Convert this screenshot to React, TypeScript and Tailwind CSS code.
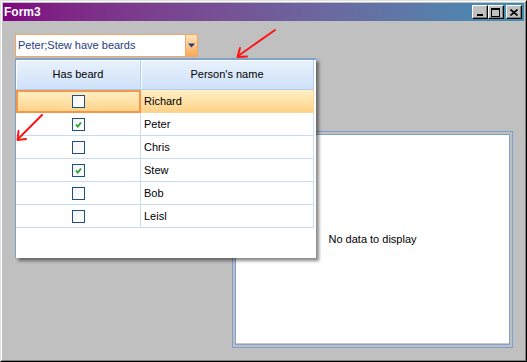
import React from "react";

const rows = [
  { name: "Richard", checked: false, selected: true },
  { name: "Peter", checked: true, selected: false },
  { name: "Chris", checked: false, selected: false },
  { name: "Stew", checked: true, selected: false },
  { name: "Bob", checked: false, selected: false },
  { name: "Leisl", checked: false, selected: false },
];

function CheckBox({ checked }: { checked: boolean }) {
  return (
    <div className="w-[13px] h-[13px] border border-[#1c5180] bg-linear-to-br from-[#f4f4f4] to-white flex items-center justify-center">
      {checked && (
        <svg width="9" height="9" viewBox="0 0 9 9">
          <path d="M2 4.5 L3.8 6.5 L7 2.5" stroke="#2fa12f" strokeWidth="1.8" fill="none" />
        </svg>
      )}
    </div>
  );
}

function TitleBtn({ children }: { children: React.ReactNode }) {
  return (
    <div className="w-[16px] h-[14px] bg-[#c0c0c0] border border-t-white border-l-white border-r-black border-b-black shadow-[inset_-1px_-1px_0_#808080] flex items-center justify-center">
      {children}
    </div>
  );
}

export default function App() {
  return (
    <div className="w-[527px] h-[362px] relative font-['Liberation_Sans',Arial,sans-serif] text-[11px] text-black">
      <div className="w-full h-full border border-t-[#dfdfdf] border-l-[#dfdfdf] border-r-black border-b-black">
        <div className="w-full h-full border border-t-white border-l-white border-r-[#808080] border-b-[#808080] bg-[#c0c0c0] p-px flex flex-col">
          {/* Title bar */}
          <div className="h-[18px] bg-linear-to-r from-[#800080] to-[#3a90b4] flex items-center justify-between pl-[1px] pr-[2px]">
            <span className="text-white font-bold text-[12px] leading-none">Form3</span>
            <div className="flex items-center">
              <TitleBtn>
                <div className="w-[6px] h-[2px] bg-black mt-[6px] -ml-[1px]" />
              </TitleBtn>
              <TitleBtn>
                <div className="w-[9px] h-[9px] border border-black border-t-2 -ml-[1px]" />
              </TitleBtn>
              <div className="w-[2px]" />
              <TitleBtn>
                <svg width="8" height="7" viewBox="0 0 8 7" className="-ml-[1px]">
                  <path d="M0.5 0.5 L7.5 6.5 M7.5 0.5 L0.5 6.5" stroke="black" strokeWidth="1.6" />
                </svg>
              </TitleBtn>
            </div>
          </div>

          {/* Client area */}
          <div className="flex-1 flex flex-col">
            {/* Combo */}
            <div className="mt-[13px] ml-[12px] w-[183px] h-[23px] flex border border-[#f0a868]">
              <div className="flex-1 bg-white border-r border-[#f0a868] flex items-center pl-[2px] text-[#1f3d80]">
                Peter;Stew have beards
              </div>
              <div className="w-[11px] bg-linear-to-b from-[#fee3bb] to-[#f8a954] flex items-center justify-center">
                <svg width="7" height="5" viewBox="0 0 7 5">
                  <path d="M0 0.5 L7 0.5 L3.5 4.5 Z" fill="#1d3f7c" />
                </svg>
              </div>
            </div>

            {/* Chart panel */}
            <div className="mt-[74px] ml-[229px] w-[281px] h-[217px] border border-[#7d9ecf] p-[2px]">
              <div className="w-full h-full border border-[#7da2ce] bg-white shadow-[inset_0_-1px_0_#c8c8c8] flex items-center justify-center">
                No data to display
              </div>
            </div>
          </div>
        </div>
      </div>

      {/* Dropdown popup */}
      <div className="absolute left-[15px] top-[58px] w-[301px] h-[200px] bg-white border-l border-t-2 border-[#7da2ce] shadow-[3px_3px_3px_rgba(0,0,0,0.45)]">
        <div className="w-[298px]">
          <div className="flex h-[30px]">
            <div className="w-[125px] bg-linear-to-b from-[#e9f2fd] to-[#cfe1f8] border-r border-b border-[#b4cdee] shadow-[inset_1px_1px_0_#fff] flex items-center justify-center">
              Has beard
            </div>
            <div className="w-[173px] bg-linear-to-b from-[#e9f2fd] to-[#cfe1f8] border-r border-b border-[#b4cdee] shadow-[inset_1px_1px_0_#fff] flex items-center justify-center">
              Person's name
            </div>
          </div>
          {rows.map((r) =>
            r.selected ? (
              <div key={r.name} className="flex h-[23px] bg-linear-to-b from-[#fff0c8] to-[#fdd183]">
                <div className="w-[125px] border-2 border-[#f6964a] flex items-center justify-center">
                  <CheckBox checked={r.checked} />
                </div>
                <div className="w-[173px] border-r border-b border-[#f9d59a] flex items-center pl-[3px]">
                  {r.name}
                </div>
              </div>
            ) : (
              <div key={r.name} className="flex h-[23px]">
                <div className="w-[125px] border-r border-b border-[#c8dbf2] flex items-center justify-center">
                  <CheckBox checked={r.checked} />
                </div>
                <div className="w-[173px] border-r border-b border-[#c8dbf2] flex items-center pl-[3px]">
                  {r.name}
                </div>
              </div>
            )
          )}
        </div>
      </div>

      {/* Red arrows */}
      <svg className="absolute inset-0 pointer-events-none" width="527" height="362" viewBox="0 0 527 362">
        <g stroke="#ff1414" strokeWidth="2" fill="none" strokeLinecap="round" strokeLinejoin="round">
          <path d="M275 30 L238 56" />
          <path d="M247 56.5 L237.5 57 L240 48" />
          <path d="M42 115 L18 139" />
          <path d="M26 139 L17.5 140 L18.5 131" />
        </g>
      </svg>
    </div>
  );
}
